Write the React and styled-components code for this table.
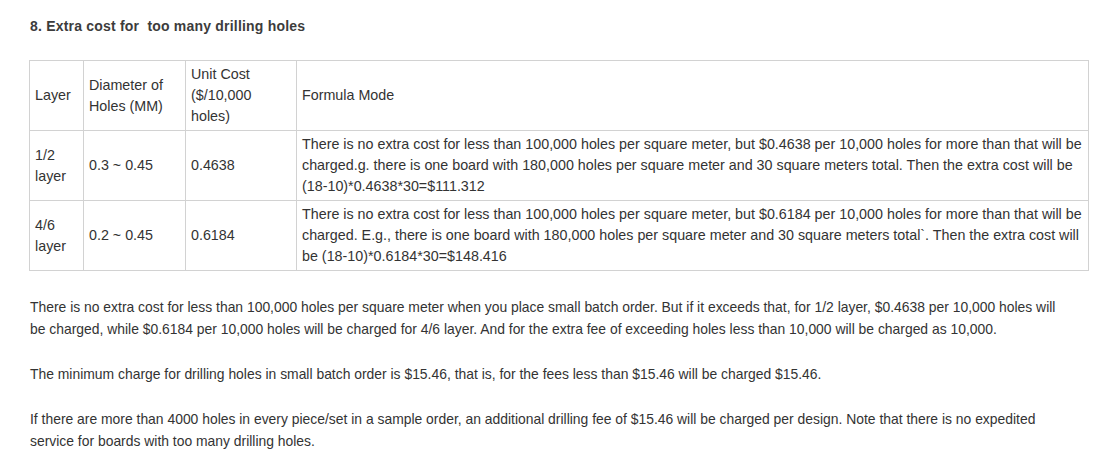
import styled, { createGlobalStyle } from "styled-components";

const GlobalStyle = createGlobalStyle`
  body {
    margin: 0;
    background: #fff;
    font-family: "Liberation Sans", Arial, sans-serif;
    color: #333;
  }
`;

const Section = styled.div`
  width: 1058px;
  padding: 17px 0 0 29px;
`;

const Heading = styled.h3`
  margin: 0 0 25px 1px;
  font-size: 14px;
  line-height: 18px;
  font-weight: bold;
  letter-spacing: 0.2px;
  color: #3c3c3c;
`;

const Table = styled.table`
  width: 1059px;
  table-layout: fixed;
  border-collapse: collapse;
  font-size: 14.3px;
  line-height: 21px;
  color: #333;
`;

const Cell = styled.td`
  border: 1px solid #d2d2d2;
  padding: 3px 5px;
  vertical-align: middle;
  height: 63px;
`;

const FormulaCell = styled(Cell)`
  padding-right: 0;
`;

const Para = styled.p`
  width: 1030px;
  margin: ${(p) => (p.$first ? 25 : 23)}px 0 0 1px;
  font-size: 13.9px;
  line-height: 22px;
  color: #333;
`;

const columns = [54, 102, 111, 792];

const rows = [
  {
    layer: "1/2 layer",
    dia: "0.3 ~ 0.45",
    cost: "0.4638",
    text: "There is no extra cost for less than 100,000 holes per square meter, but $0.4638 per 10,000 holes for more than that will be charged.g. there is one board with 180,000 holes per square meter and 30 square meters total. Then the extra cost will be (18-10)*0.4638*30=$111.312",
  },
  {
    layer: "4/6 layer",
    dia: "0.2 ~ 0.45",
    cost: "0.6184",
    text: "There is no extra cost for less than 100,000 holes per square meter, but $0.6184 per 10,000 holes for more than that will be charged. E.g., there is one board with 180,000 holes per square meter and 30 square meters total`. Then the extra cost will be (18-10)*0.6184*30=$148.416",
  },
];

const App = () => {
  return (
    <>
      <GlobalStyle />
      <Section>
        <Heading>8. Extra cost for&nbsp; too many drilling holes</Heading>
        <Table>
          <colgroup>
            {columns.map((w, i) => (
              <col key={i} style={{ width: w }} />
            ))}
          </colgroup>
          <tbody>
            <tr>
              <Cell>Layer</Cell>
              <Cell>Diameter of Holes (MM)</Cell>
              <Cell>Unit Cost ($/10,000 holes)</Cell>
              <FormulaCell>Formula Mode</FormulaCell>
            </tr>
            {rows.map((r) => (
              <tr key={r.layer}>
                <Cell>{r.layer}</Cell>
                <Cell>{r.dia}</Cell>
                <Cell>{r.cost}</Cell>
                <FormulaCell>{r.text}</FormulaCell>
              </tr>
            ))}
          </tbody>
        </Table>
        <Para $first>
          There is no extra cost for less than 100,000 holes per square meter
          when you place small batch order. But if it exceeds that, for 1/2
          layer, $0.4638 per 10,000 holes will be charged, while $0.6184 per
          10,000 holes will be charged for 4/6 layer. And for the extra fee of
          exceeding holes less than 10,000 will be charged as 10,000.
        </Para>
        <Para>
          The minimum charge for drilling holes in small batch order is $15.46,
          that is, for the fees less than $15.46 will be charged $15.46.
        </Para>
        <Para>
          If there are more than 4000 holes in every piece/set in a sample
          order, an additional drilling fee of $15.46 will be charged per
          design. Note that there is no expedited service for boards with too
          many drilling holes.
        </Para>
      </Section>
    </>
  );
};

export default App;
